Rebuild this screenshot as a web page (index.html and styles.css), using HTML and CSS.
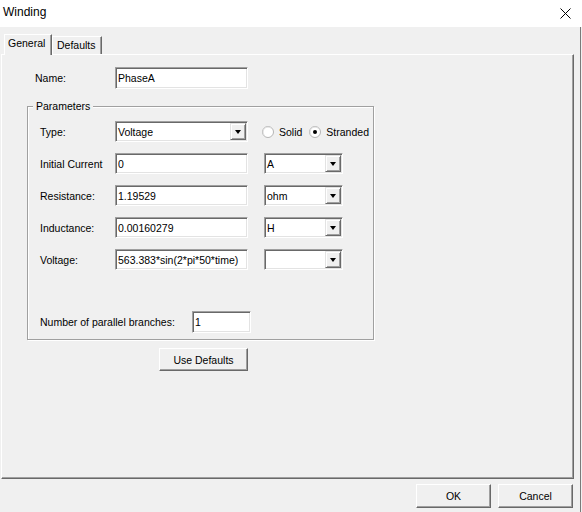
FILE: index.html
```html
<!DOCTYPE html>
<html>
<head>
<meta charset="utf-8">
<link rel="stylesheet" href="styles.css">
</head>
<body>
<div class="titlebar">
  <span class="title">Winding</span>
  <svg class="close" width="11" height="11" viewBox="0 0 11 11"><path d="M0.5 0.5L10.5 10.5M10.5 0.5L0.5 10.5" stroke="#000" stroke-width="1" fill="none"/></svg>
</div>
<div class="window">
  <div class="tabs">
    <div class="tab active">General</div>
    <div class="tab">Defaults</div>
  </div>
  <div class="page">
    <div class="name-row">
      <label class="lbl-name">Name:</label>
      <input class="field name-input" value="PhaseA">
    </div>
    <fieldset class="group">
      <legend>Parameters</legend>
      <div class="rows">
        <div class="row">
          <label>Type:</label>
          <div class="combo wide"><span class="ctext">Voltage</span><span class="drop"><i></i></span></div>
          <div class="radios">
            <span class="radio"><svg width="12" height="12" viewBox="0 0 12 12"><circle cx="6" cy="6" r="5.5" fill="#fff" stroke="#b4b4b4"/><path d="M2.5 9.5A4.6 4.6 0 0 1 9.5 2.5" stroke="#e0e0e0" fill="none"/></svg><span>Solid</span></span>
            <span class="radio"><svg width="12" height="12" viewBox="0 0 12 12"><circle cx="6" cy="6" r="5.5" fill="#fff" stroke="#b4b4b4"/><path d="M2.5 9.5A4.6 4.6 0 0 1 9.5 2.5" stroke="#e0e0e0" fill="none"/><circle cx="6" cy="6" r="2" fill="#000"/></svg><span>Stranded</span></span>
          </div>
        </div>
        <div class="row">
          <label>Initial Current</label>
          <input class="field wide" value="0">
          <div class="combo unit"><span class="ctext">A</span><span class="drop"><i></i></span></div>
        </div>
        <div class="row">
          <label>Resistance:</label>
          <input class="field wide" value="1.19529">
          <div class="combo unit"><span class="ctext">ohm</span><span class="drop"><i></i></span></div>
        </div>
        <div class="row">
          <label>Inductance:</label>
          <input class="field wide" value="0.00160279">
          <div class="combo unit"><span class="ctext">H</span><span class="drop"><i></i></span></div>
        </div>
        <div class="row">
          <label>Voltage:</label>
          <input class="field wide" value="563.383*sin(2*pi*50*time)">
          <div class="combo unit"><span class="ctext"></span><span class="drop"><i></i></span></div>
        </div>
        <div class="row parallel">
          <label class="lbl-par">Number of parallel branches:</label>
          <input class="field par-input" value="1">
        </div>
      </div>
    </fieldset>
    <button class="btn defaults">Use Defaults</button>
  </div>
  <div class="footer">
    <button class="btn foot">OK</button>
    <button class="btn foot">Cancel</button>
  </div>
</div>
</body>
</html>
```
FILE: styles.css
```css
html, body {
  margin: 0;
  padding: 0;
}
body {
  width: 582px;
  height: 512px;
  overflow: hidden;
  background: #f0f0f0;
  font-family: "Liberation Sans", Arial, sans-serif;
  font-size: 10.5px;
  color: #000;
}
.titlebar {
  height: 27px;
  background: #fff;
  display: flex;
  align-items: center;
  justify-content: space-between;
  padding: 0 11px 3px 3px;
  box-sizing: border-box;
}
.title {
  font-size: 12px;
}
.close {
  display: block;
  margin-top: 2px;
}
.window {
  width: 581px;
  height: 485px;
  box-sizing: border-box;
  border-right: 1px solid #7a7a7a;
  display: flex;
  flex-direction: column;
}
.tabs {
  display: flex;
  align-items: flex-end;
  height: 20px;
  margin-top: 7px;
  padding-left: 4px;
}
.tab {
  box-sizing: border-box;
  height: 18px;
  padding: 2px 0 0 4px;
  border-top: 1px solid #fff;
  border-left: 1px solid #fff;
  border-right: 1px solid #696969;
  box-shadow: inset -1px 0 #a0a0a0;
  width: 50px;
  background: #f0f0f0;
}
.tab.active {
  height: 21px;
  width: 48px;
  margin-bottom: -1px;
  padding: 2px 0 0 3px;
  position: relative;
  z-index: 1;
}
.page {
  margin-left: 1px;
  width: 573px;
  height: 425px;
  box-sizing: border-box;
  border-top: 1px solid #fff;
  border-left: 1px solid #fff;
  border-right: 1px solid #696969;
  border-bottom: 1px solid #696969;
  box-shadow: inset -1px -1px #a0a0a0;
}
.name-row {
  display: flex;
  align-items: center;
  margin: 12px 0 0 33px;
}
.lbl-name {
  width: 80px;
}
.field {
  box-sizing: border-box;
  height: 21px;
  margin: 0;
  border: 1px solid;
  border-color: #a0a0a0 #fff #fff #a0a0a0;
  box-shadow: inset 1px 1px #696969, inset -1px -1px #e3e3e3;
  background: #fff;
  padding: 0 0 0 2px;
  font: inherit;
  color: #000;
  outline: none;
}
.name-input {
  width: 133px;
  height: 22px;
}
.wide {
  width: 133px;
}
.group {
  margin: 10px 0 0 25px;
  width: 347px;
  box-sizing: border-box;
  padding: 0;
  min-width: 0;
  border: 1px solid #a0a0a0;
  box-shadow: inset 1px 1px #fff, 1px 1px #fff;
}
.group legend {
  line-height: 14px;
  padding: 0 3px;
  margin-left: 5px;
  background: #f0f0f0;
}
.rows {
  display: flex;
  flex-direction: column;
  gap: 11px;
  padding: 8px 0 6px 12px;
}
.row {
  display: flex;
  align-items: center;
  height: 21px;
}
.row label {
  width: 75px;
  flex: none;
}
.combo {
  box-sizing: border-box;
  height: 21px;
  border: 1px solid;
  border-color: #a0a0a0 #fff #fff #a0a0a0;
  box-shadow: inset 1px 1px #696969, inset -1px -1px #e3e3e3;
  background: #fff;
  padding: 1px;
  display: flex;
  align-items: stretch;
}
.combo.unit {
  width: 79px;
  margin-left: 16px;
}
.ctext {
  flex: 1;
  padding-left: 1px;
  display: flex;
  align-items: center;
}
.drop {
  width: 16px;
  box-sizing: border-box;
  border: 1px solid;
  border-color: #e3e3e3 #696969 #696969 #e3e3e3;
  box-shadow: inset 1px 1px #fff, inset -1px -1px #a0a0a0;
  background: #f0f0f0;
  display: flex;
  align-items: center;
  justify-content: center;
}
.drop i {
  width: 0;
  height: 0;
  border-left: 3.5px solid transparent;
  border-right: 3.5px solid transparent;
  border-top: 4px solid #000;
  margin-top: 1px;
}
.radios {
  display: flex;
  align-items: center;
  margin-left: 14px;
  gap: 7px;
}
.radio {
  display: flex;
  align-items: center;
  gap: 5px;
}
.radio svg {
  display: block;
}
.row.parallel {
  margin-top: 30px;
  height: 22px;
}
.row label.lbl-par {
  width: 152px;
}
.par-input {
  width: 59px;
  height: 22px;
}
.btn {
  box-sizing: border-box;
  margin: 0;
  font: inherit;
  color: #000;
  background: #f0f0f0;
  border: 1px solid;
  border-color: #fff #696969 #696969 #fff;
  box-shadow: inset -1px -1px #a0a0a0;
  padding: 0;
  height: 23px;
}
.defaults {
  display: block;
  width: 89px;
  margin: 8px 0 0 157px;
}
.footer {
  display: flex;
  justify-content: flex-end;
  gap: 7px;
  padding: 5px 7px 0 0;
}
.foot {
  width: 75px;
  height: 24px;
}
```
